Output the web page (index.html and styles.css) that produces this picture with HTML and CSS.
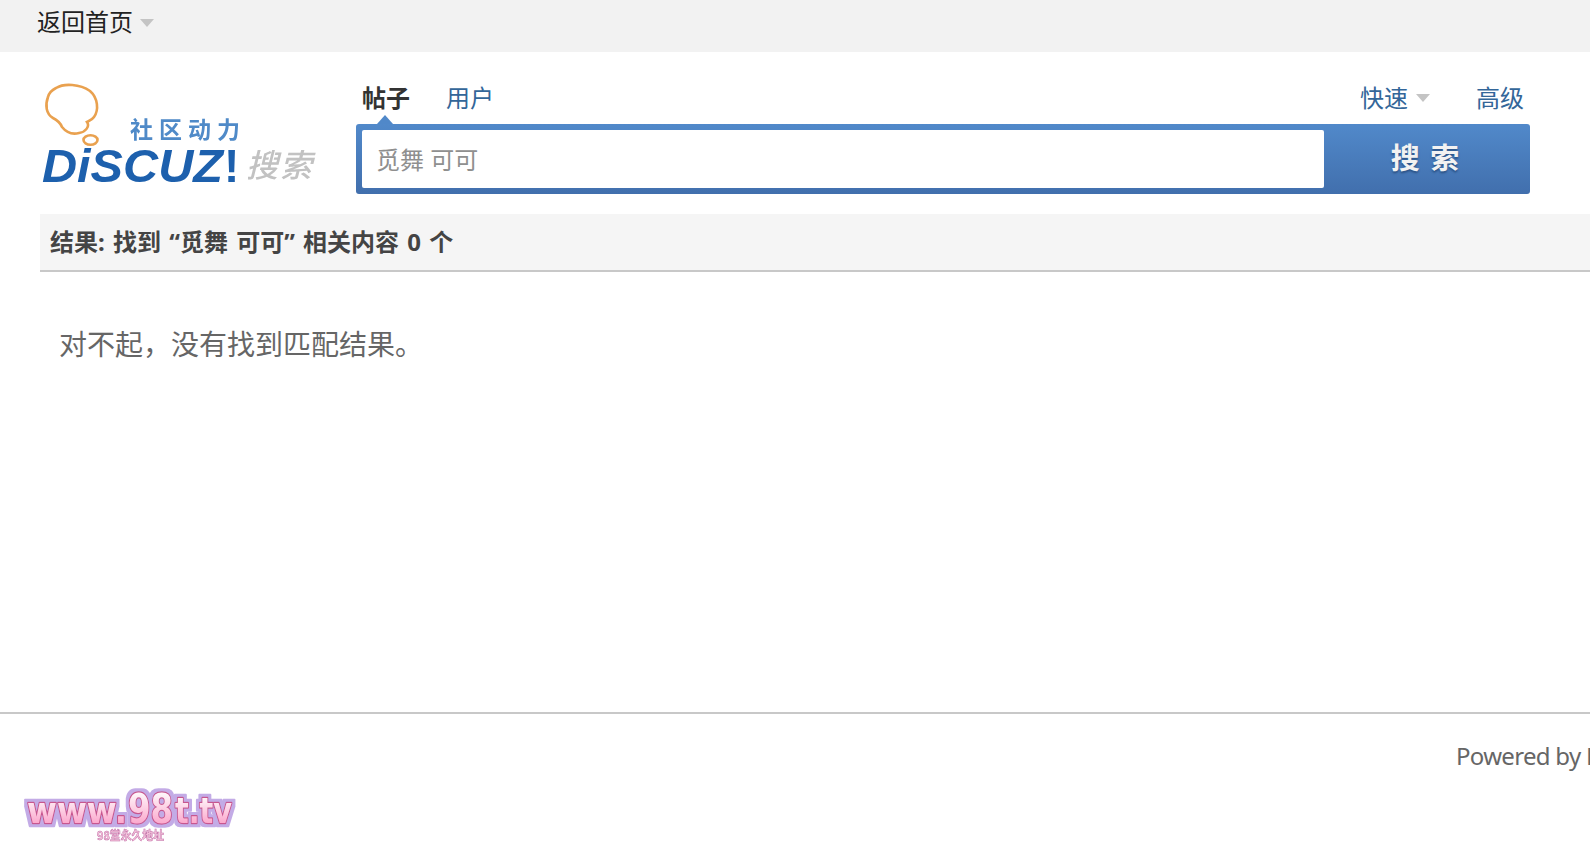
FILE: index.html
```html
<!DOCTYPE html>
<html lang="zh">
<head>
<meta charset="utf-8">
<title>搜索</title>
<link rel="stylesheet" href="styles.css">
</head>
<body>
<div class="topbar"><a class="home">返回首页</a><span class="arrow"></span></div>
<header class="header">
  <svg class="logo" width="280" height="112" viewBox="0 0 280 112">
    <path class="bubble" d="M16 8 C24 3 40 4 50 11 C58 18 59 30 54 37 C52 40 49 41 47 42 C50 46 46 52 39 53 C31 55 26 52 22 47 C20 42 17 40 13 38 C6 34 5 25 8 17 C9 13 12 10 16 8 Z"/>
    <ellipse class="bubble" cx="50.5" cy="60" rx="7" ry="4.8"/>
    <text class="slogan" x="90" y="58" textLength="110" lengthAdjust="spacing">社区动力</text>
    <text class="brand" x="2" y="102" textLength="181" lengthAdjust="spacingAndGlyphs">DiSCUZ</text>
    <text class="brand bang" x="184" y="102">!</text>
    <text class="logo-search" x="206" y="97" textLength="66" lengthAdjust="spacing">搜索</text>
  </svg>
  <div class="search">
    <div class="tabs">
      <a class="tab active">帖子</a>
      <a class="tab">用户</a>
      <span class="spacer"></span>
      <a class="tab">快速</a><span class="arrow small"></span>
      <a class="tab last">高级</a>
    </div>
    <form class="box">
      <div class="field">觅舞 可可</div>
      <div class="submit">搜 索</div>
    </form>
  </div>
</header>
<div class="result">结果: 找到 “觅舞 可可” 相关内容 0 个</div>
<main class="message">对不起，没有找到匹配结果。</main>
<footer class="footer"><span class="powered">Powered by Discuz!</span></footer>
<svg class="badge" width="230" height="64" viewBox="0 0 230 64">
  <defs>
    <linearGradient id="pinkfill" x1="0" y1="0" x2="0" y2="1">
      <stop offset="0.1" stop-color="#ffffff"/>
      <stop offset="0.9" stop-color="#fb9cc6"/>
    </linearGradient>
    <filter id="halo" x="-5%" y="-20%" width="110%" height="140%">
      <feMorphology in="SourceAlpha" operator="dilate" radius="3" result="fat"/>
      <feFlood flood-color="#c3abe6"/>
      <feComposite in2="fat" operator="in" result="ring"/>
      <feMerge><feMergeNode in="ring"/><feMergeNode in="SourceGraphic"/></feMerge>
    </filter>
  </defs>
  <g filter="url(#halo)">
    <text class="badge-main" x="8" y="38" textLength="100" lengthAdjust="spacingAndGlyphs">www.</text>
    <text class="badge-main big" x="109" y="38" textLength="45" lengthAdjust="spacingAndGlyphs">98</text>
    <text class="badge-main" x="156" y="38" textLength="57" lengthAdjust="spacingAndGlyphs">t.tv</text>
  </g>
  <text class="badge-sub" x="78" y="55" textLength="67" lengthAdjust="spacingAndGlyphs">98堂永久地址</text>
</svg>
</body>
</html>
```
FILE: styles.css
```css
* { box-sizing: border-box; }
html, body { margin: 0; padding: 0; height: 850px; overflow: hidden; background: #fff; }
body { position: relative; width: 1590px; font-family: "Noto Sans", "Noto Sans CJK SC", sans-serif; font-size: 24px; color: #444; }

.topbar { height: 52px; background: #f2f2f2; padding-left: 37px; display: flex; align-items: center; color: #222; padding-bottom: 8px; line-height: 34px; }
.arrow { width: 0; height: 0; margin-left: 7px; margin-top: 2px; border-style: solid; border-width: 8px 7px 0; border-color: #c4c4c4 transparent transparent; }
.arrow.small { margin-left: 8px; margin-top: 0; margin-right: 20px; }

.header { display: flex; padding: 28px 60px 0 40px; height: 162px; }
.logo { flex: none; margin-right: 36px; filter: blur(0.5px); }
.bubble { fill: none; stroke: #e9a14f; stroke-width: 2.6; }
.slogan { font: bold 23px "Noto Sans CJK SC", sans-serif; fill: #4f8ac8; }
.brand { font: italic bold 46px "Liberation Sans", sans-serif; fill: #1d60ad; }
.brand.bang { font-style: normal; }
.logo-search { font: italic 500 32px "Noto Sans CJK SC", sans-serif; fill: #c2c2c2; }

.search { flex: 1; display: flex; flex-direction: column; }
.tabs { display: flex; align-items: center; height: 44px; padding: 0 6px 8px 6px; line-height: 34px; }
.tab { color: #369; margin-right: 36px; }
.tab.active { color: #333; font-weight: bold; position: relative; }
.tab.active::after { content: ""; position: absolute; left: 15px; bottom: -9px; width: 0; height: 0; border-style: solid; border-width: 0 8px 9px; border-color: transparent transparent #5088c9; }
.tab.last { margin-left: 26px; margin-right: 0; }
.tab:nth-of-type(3) { margin-right: 0; }
.spacer { flex: 1; }

.box { display: flex; height: 70px; padding: 6px 0 6px 6px; border-radius: 3px; background: linear-gradient(#5189ca, #416fad); margin: 0; }
.field { flex: 1; background: #fff; border-radius: 2px; padding-left: 14px; line-height: 60px; color: #8f8f8f; }
.submit { width: 206px; margin: -6px 0; padding-right: 4px; text-align: center; font: bold 29px/64px "Noto Sans CJK SC", sans-serif; word-spacing: 4px; color: #f2f2f2; text-shadow: 0 2px 2px #2c5488; }

.result { margin: 0 0 0 40px; height: 58px; padding-left: 10px; background: #f5f5f5; border-bottom: 2px solid #c8c8c8; font-weight: bold; line-height: 56px; color: #444; white-space: nowrap; word-spacing: 2px; }
.message { height: 440px; padding: 52px 0 0 59px; font-size: 28px; line-height: 40px; color: #666; }
.footer { border-top: 2px solid #c8c8c8; padding: 25px 0 0 1456px; white-space: nowrap; overflow: hidden; line-height: 34px; color: #666; letter-spacing: -0.7px; }

.badge { position: absolute; left: 19px; top: 785px; filter: blur(0.3px); }
.badge text { font-family: "DejaVu Sans", sans-serif; font-weight: bold; }
.badge-main { font-size: 36px; fill: url(#pinkfill); stroke: #c7568f; stroke-width: 2.4; stroke-linejoin: round; paint-order: stroke; }
.badge text.big { font-size: 41px; }
.badge text.badge-sub { font-size: 12px; fill: #f7c3dc; stroke: #c070a8; stroke-width: 0.5; font-family: "Noto Sans CJK SC", sans-serif; }
```
